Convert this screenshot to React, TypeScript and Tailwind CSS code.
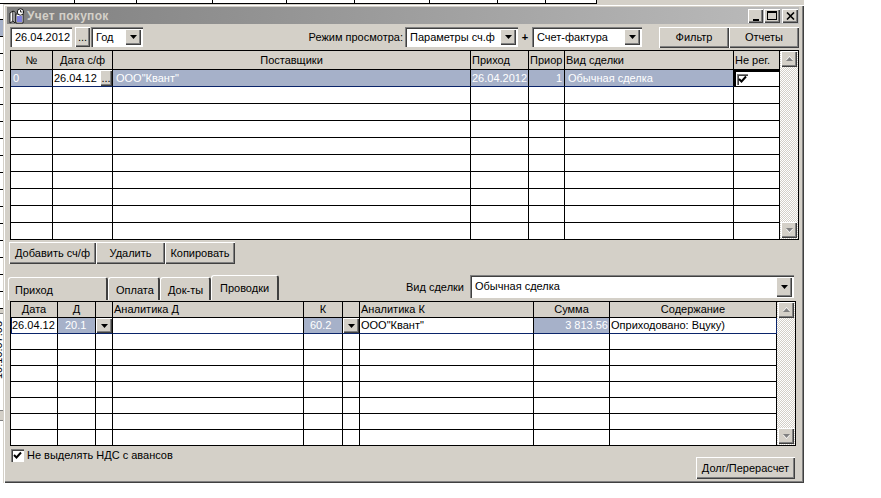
import React from 'react';

const raised = 'shadow-[inset_1px_1px_0_#ffffff,inset_-1px_-1px_0_#404040,inset_-2px_-2px_0_#808080]';
const sunken = 'shadow-[inset_1px_1px_0_#808080,inset_2px_2px_0_#404040,inset_-1px_-1px_0_#ffffff]';
const cell = 'border-r border-b border-black overflow-hidden whitespace-nowrap leading-none flex items-center';
const selected = 'bg-[#a6b1c9] text-white border-b-[#0a246a]';

const topCols = 'grid-cols-[42px_60px_358px_58px_36px_169px_46px]';
const bottomCols = 'grid-cols-[47px_38px_17px_191px_39px_17px_174px_76px_167px]';

const topHeaders = [
    { t: '№', c: 'justify-center' },
    { t: 'Дата с/ф', c: 'justify-center' },
    { t: 'Поставщики', c: 'justify-center' },
    { t: 'Приход', c: 'pl-[1px]' },
    { t: 'Приор', c: 'pl-[1px]' },
    { t: 'Вид сделки', c: 'pl-[1px]' },
    { t: 'Не рег.', c: 'pl-[1px]' },
];

const bottomHeaders = [
    { t: 'Дата', c: 'justify-center' },
    { t: 'Д', c: 'justify-center' },
    { t: '', c: '' },
    { t: 'Аналитика Д', c: 'pl-[1px]' },
    { t: 'К', c: 'justify-center' },
    { t: '', c: '' },
    { t: 'Аналитика К', c: 'pl-[1px]' },
    { t: 'Сумма', c: 'justify-center' },
    { t: 'Содержание', c: 'justify-center' },
];

const Arrow = ({ disabled = false, up = false }: { disabled?: boolean; up?: boolean }) => (
    <svg width="9" height="6" viewBox="0 0 9 6" className={up ? 'rotate-180' : ''}>
        {disabled && <path d="M1 2h7L4.500 6z" fill="#ffffff" />}
        <path d="M1 1h7L4.500 5z" fill={disabled ? '#808080' : '#000000'} />
    </svg>
);

const Check = () => (
    <svg width="9" height="9" viewBox="0 0 9 9">
        <path d="M1 4l2.500 2.500L8 1.500" fill="none" stroke="#000" strokeWidth="2" />
    </svg>
);

const Btn = ({ children, className = '' }: { children: React.ReactNode; className?: string }) => (
    <div className={`flex items-center justify-center bg-[#d4d0c8] leading-none ${raised} ${className}`}>{children}</div>
);

const Combo = ({ text, className = '', arrow = 'h-[16px]' }: { text: string; className?: string; arrow?: string }) => (
    <div className={`flex items-center justify-between bg-white pl-[5px] pr-[2px] ${sunken} ${className}`}>
        <span className="leading-none whitespace-nowrap">{text}</span>
        <Btn className={`w-[16px] ${arrow}`}><Arrow /></Btn>
    </div>
);

const Scrollbar = () => (
    <div className="w-[18px] flex flex-col justify-between border-b border-black pl-[1px] bg-[repeating-conic-gradient(#ffffff_0%_25%,#d4d0c8_0%_50%)] bg-size-[2px_2px]">
        <Btn className="w-[16px] h-[16px]"><Arrow disabled up /></Btn>
        <Btn className="w-[16px] h-[16px] mb-[1px]"><Arrow disabled /></Btn>
    </div>
);

const TopGrid = () => (
    <div className="ml-[3px] w-[789px] h-[190px] flex border-t border-x border-black bg-white">
        <div className={`w-[769px] grid ${topCols} auto-rows-[17px] grid-rows-[19px]`}>
            {topHeaders.map((h) => (
                <div key={h.t} className={`${cell} bg-[#d4d0c8] ${h.c}`}>{h.t}</div>
            ))}
            <div className={`${cell} ${selected} pl-[2px]`}>0</div>
            <div className={`${cell} border-b-[#0a246a] justify-between pl-[1px]`}>
                <span>26.04.12</span>
                <Btn className="w-[12px] h-[16px]">...</Btn>
            </div>
            <div className={`${cell} ${selected} pl-[3px]`}>ООО"Квант"</div>
            <div className={`${cell} ${selected} pl-[1px]`}>26.04.2012</div>
            <div className={`${cell} ${selected} justify-end pr-[2px]`}>1</div>
            <div className={`${cell} ${selected} pl-[3px]`}>Обычная сделка</div>
            <div className={`${cell} border-2 border-[#0a246a] pl-[1px]`}>
                <div className={`w-[11px] h-[11px] shrink-0 flex items-center justify-center bg-white ${sunken}`}><Check /></div>
            </div>
            {Array.from({ length: 9 * 7 }, (_, i) => <div key={i} className={cell} />)}
        </div>
        <Scrollbar />
    </div>
);

const BottomGrid = () => (
    <div className="ml-[3px] w-[786px] h-[145px] flex border-t border-x border-black bg-white">
        <div className={`w-[766px] grid ${bottomCols} auto-rows-[16px]`}>
            {bottomHeaders.map((h, i) => (
                <div key={i} className={`${cell} bg-[#d4d0c8] ${h.c}`}>{h.t}</div>
            ))}
            <div className={`${cell} border-l border-l-[#0a246a] border-b-[#0a246a]`}>26.04.12</div>
            <div className={`${cell} ${selected} pl-[7px]`}>20.1</div>
            <div className={`${cell} border-b-[#0a246a]`}>
                <Btn className="w-[16px] h-[15px]"><Arrow /></Btn>
            </div>
            <div className={`${cell} border-b-[#0a246a]`} />
            <div className={`${cell} ${selected} pl-[6px]`}>60.2</div>
            <div className={`${cell} border-b-[#0a246a]`}>
                <Btn className="w-[16px] h-[15px]"><Arrow /></Btn>
            </div>
            <div className={`${cell} border-b-[#0a246a] pl-[1px]`}>ООО"Квант"</div>
            <div className={`${cell} ${selected} justify-end pr-[1px]`}>3 813.56</div>
            <div className={`${cell} border-b-[#0a246a] border-r-[#0a246a] pl-[1px]`}>Оприходовано: Вцуку)</div>
            {Array.from({ length: 7 * 9 }, (_, i) => <div key={i} className={cell} />)}
        </div>
        <Scrollbar />
    </div>
);

const Tab = ({ text, className = '' }: { text: string; className?: string }) => (
    <div className={`flex items-center bg-[#d4d0c8] rounded-t-[3px] border-t border-l border-white border-r-2 border-r-[#404040] leading-none ${className}`}>
        {text}
    </div>
);

export default function App() {
    return (
        <div className="relative w-[881px] h-[498px] overflow-hidden bg-white text-[11px] text-black font-['Liberation_Sans',Arial,sans-serif]">
            {/* окно позади: верхняя кромка */}
            <div className="absolute left-0 top-0 w-[804px] h-[4px] flex">
                <div className="w-[597px] grid grid-cols-[75px_62px_76px_74px_68px_75px_68px_48px_51px] border-b border-black">
                    {Array.from({ length: 9 }, (_, i) => <div key={i} className="border-r border-black" />)}
                </div>
                <div className="flex-1 bg-[#d4d0c8]" />
            </div>

            {/* окно позади: левая кромка */}
            <div className="absolute left-0 top-[4px] w-[3px] h-[450px] overflow-hidden">
                <div className="h-[16px] border-b border-black" />
                <div className="h-[17px] bg-[#a6b1c9] border-b border-black" />
                {Array.from({ length: 16 }, (_, i) => <div key={i} className="h-[17px] border-b border-black" />)}
                <div className="h-[4px] bg-[#d4d0c8]" />
                <div className="h-[98px] border-y border-[#808080] overflow-hidden">
                    <div className="-rotate-90 origin-top-left translate-y-[65px] -translate-x-[7px] w-[90px] whitespace-nowrap leading-none">10.10.07.03</div>
                </div>
                <div className="h-[10px] bg-[#d4d0c8] border-b border-[#808080]" />
            </div>

            {/* окно "Учет покупок" */}
            <div className={`absolute left-[3px] top-[4px] w-[801px] h-[479px] flex flex-col bg-[#d4d0c8] pl-[4px] pt-[3px] shadow-[inset_1px_1px_0_#d4d0c8,inset_2px_2px_0_#ffffff,inset_-1px_-1px_0_#404040,inset_-2px_-2px_0_#808080]`}>
                <div className="w-[792px] h-[17px] flex items-center shrink-0 pl-[2px] pr-[1px] bg-linear-to-r from-[#808080] to-[#bcbcbc]">
                    <svg width="16" height="16" viewBox="0 0 16 16" className="shrink-0">
                        <path d="M1 5l3-2v10l-3 2z" fill="#ffffff" stroke="#000" strokeWidth="0.800" />
                        <path d="M4 3l2 1v11l-2-2z" fill="#ffffff" stroke="#000" strokeWidth="0.800" />
                        <path d="M7 6h7v9H7z" fill="#ffffff" stroke="#000" strokeWidth="0.800" />
                        <path d="M8 9h5M8 11h5M8 13h5" stroke="#0000c0" strokeWidth="1" />
                        <circle cx="11.500" cy="4" r="3.200" fill="#ffffff" stroke="#000" strokeWidth="0.900" />
                        <path d="M11.500 2v2h2" fill="none" stroke="#000" strokeWidth="0.800" />
                    </svg>
                    <span className="ml-[2px] font-bold text-[12px] tracking-[0.3px] leading-none text-[#d4d0c8]">Учет покупок</span>
                    <div className="ml-auto flex items-center">
                        <Btn className="w-[15px] h-[14px] items-end pb-[2px]">
                            <div className="w-[6px] h-[2px] bg-black" />
                        </Btn>
                        <Btn className="ml-[1px] w-[16px] h-[14px]">
                            <div className="w-[10px] h-[9px] border border-t-2 border-black" />
                        </Btn>
                        <Btn className="ml-[2px] w-[16px] h-[14px]">
                            <svg width="9" height="8" viewBox="0 0 9 8">
                                <path d="M1 0.500l7 7M8 0.500l-7 7" stroke="#000" strokeWidth="1.600" />
                            </svg>
                        </Btn>
                    </div>
                </div>

                <div className="h-[26px] flex items-center shrink-0 ml-[3px]">
                    <div className={`w-[62px] h-[20px] flex items-center pl-[5px] bg-white leading-none ${sunken}`}>26.04.2012</div>
                    <Btn className="ml-[3px] w-[15px] h-[20px]">...</Btn>
                    <Combo text="Год" className="ml-[1px] w-[52px] h-[20px] pl-[4px]" />
                    <span className="ml-[165px] w-[97px] pr-[2px] text-right leading-none whitespace-nowrap">Режим просмотра:</span>
                    <Combo text="Параметры сч.ф" className="w-[113px] h-[20px]" />
                    <span className="w-[14px] text-center font-bold leading-none">+</span>
                    <Combo text="Счет-фактура" className="w-[110px] h-[20px]" />
                    <Btn className="ml-[17px] w-[70px] h-[21px]">Фильтр</Btn>
                    <Btn className="w-[70px] h-[21px]">Отчеты</Btn>
                </div>

                <TopGrid />

                <div className="mt-[2px] ml-[2px] h-[22px] flex shrink-0">
                    <Btn className="w-[87px] h-[22px]">Добавить сч/ф</Btn>
                    <Btn className="w-[69px] h-[22px]">Удалить</Btn>
                    <Btn className="w-[70px] h-[22px]">Копировать</Btn>
                </div>

                <div className="mt-[11px] ml-[1px] h-[25px] flex items-end shrink-0">
                    <Tab text="Приход" className="w-[100px] h-[23px] pl-[6px] pt-[3px]" />
                    <Tab text="Оплата" className="w-[52px] h-[23px] pl-[7px] pt-[3px]" />
                    <Tab text="Док-ты" className="w-[51px] h-[23px] pl-[7px] pt-[3px]" />
                    <Tab text="Проводки" className="w-[68px] h-[25px] pl-[8px]" />
                    <span className="ml-[127px] w-[64px] self-center leading-none whitespace-nowrap">Вид сделки</span>
                    <Combo text="Обычная сделка" arrow="h-[20px]" className="w-[324px] h-[23px] self-start" />
                </div>

                <div className="mt-[1px]">
                    <BottomGrid />
                </div>

                <div className="h-[33px] w-[790px] ml-[4px] flex justify-between shrink-0">
                    <div className="mt-[3px] flex h-[13px] items-center">
                        <div className={`w-[13px] h-[13px] flex items-center justify-center bg-white ${sunken}`}><Check /></div>
                        <span className="ml-[3px] leading-none whitespace-nowrap">Не выделять НДС с авансов</span>
                    </div>
                    <Btn className="self-end w-[99px] h-[22px] mr-[6px]">Долг/Перерасчет</Btn>
                </div>
            </div>
        </div>
    );
}
